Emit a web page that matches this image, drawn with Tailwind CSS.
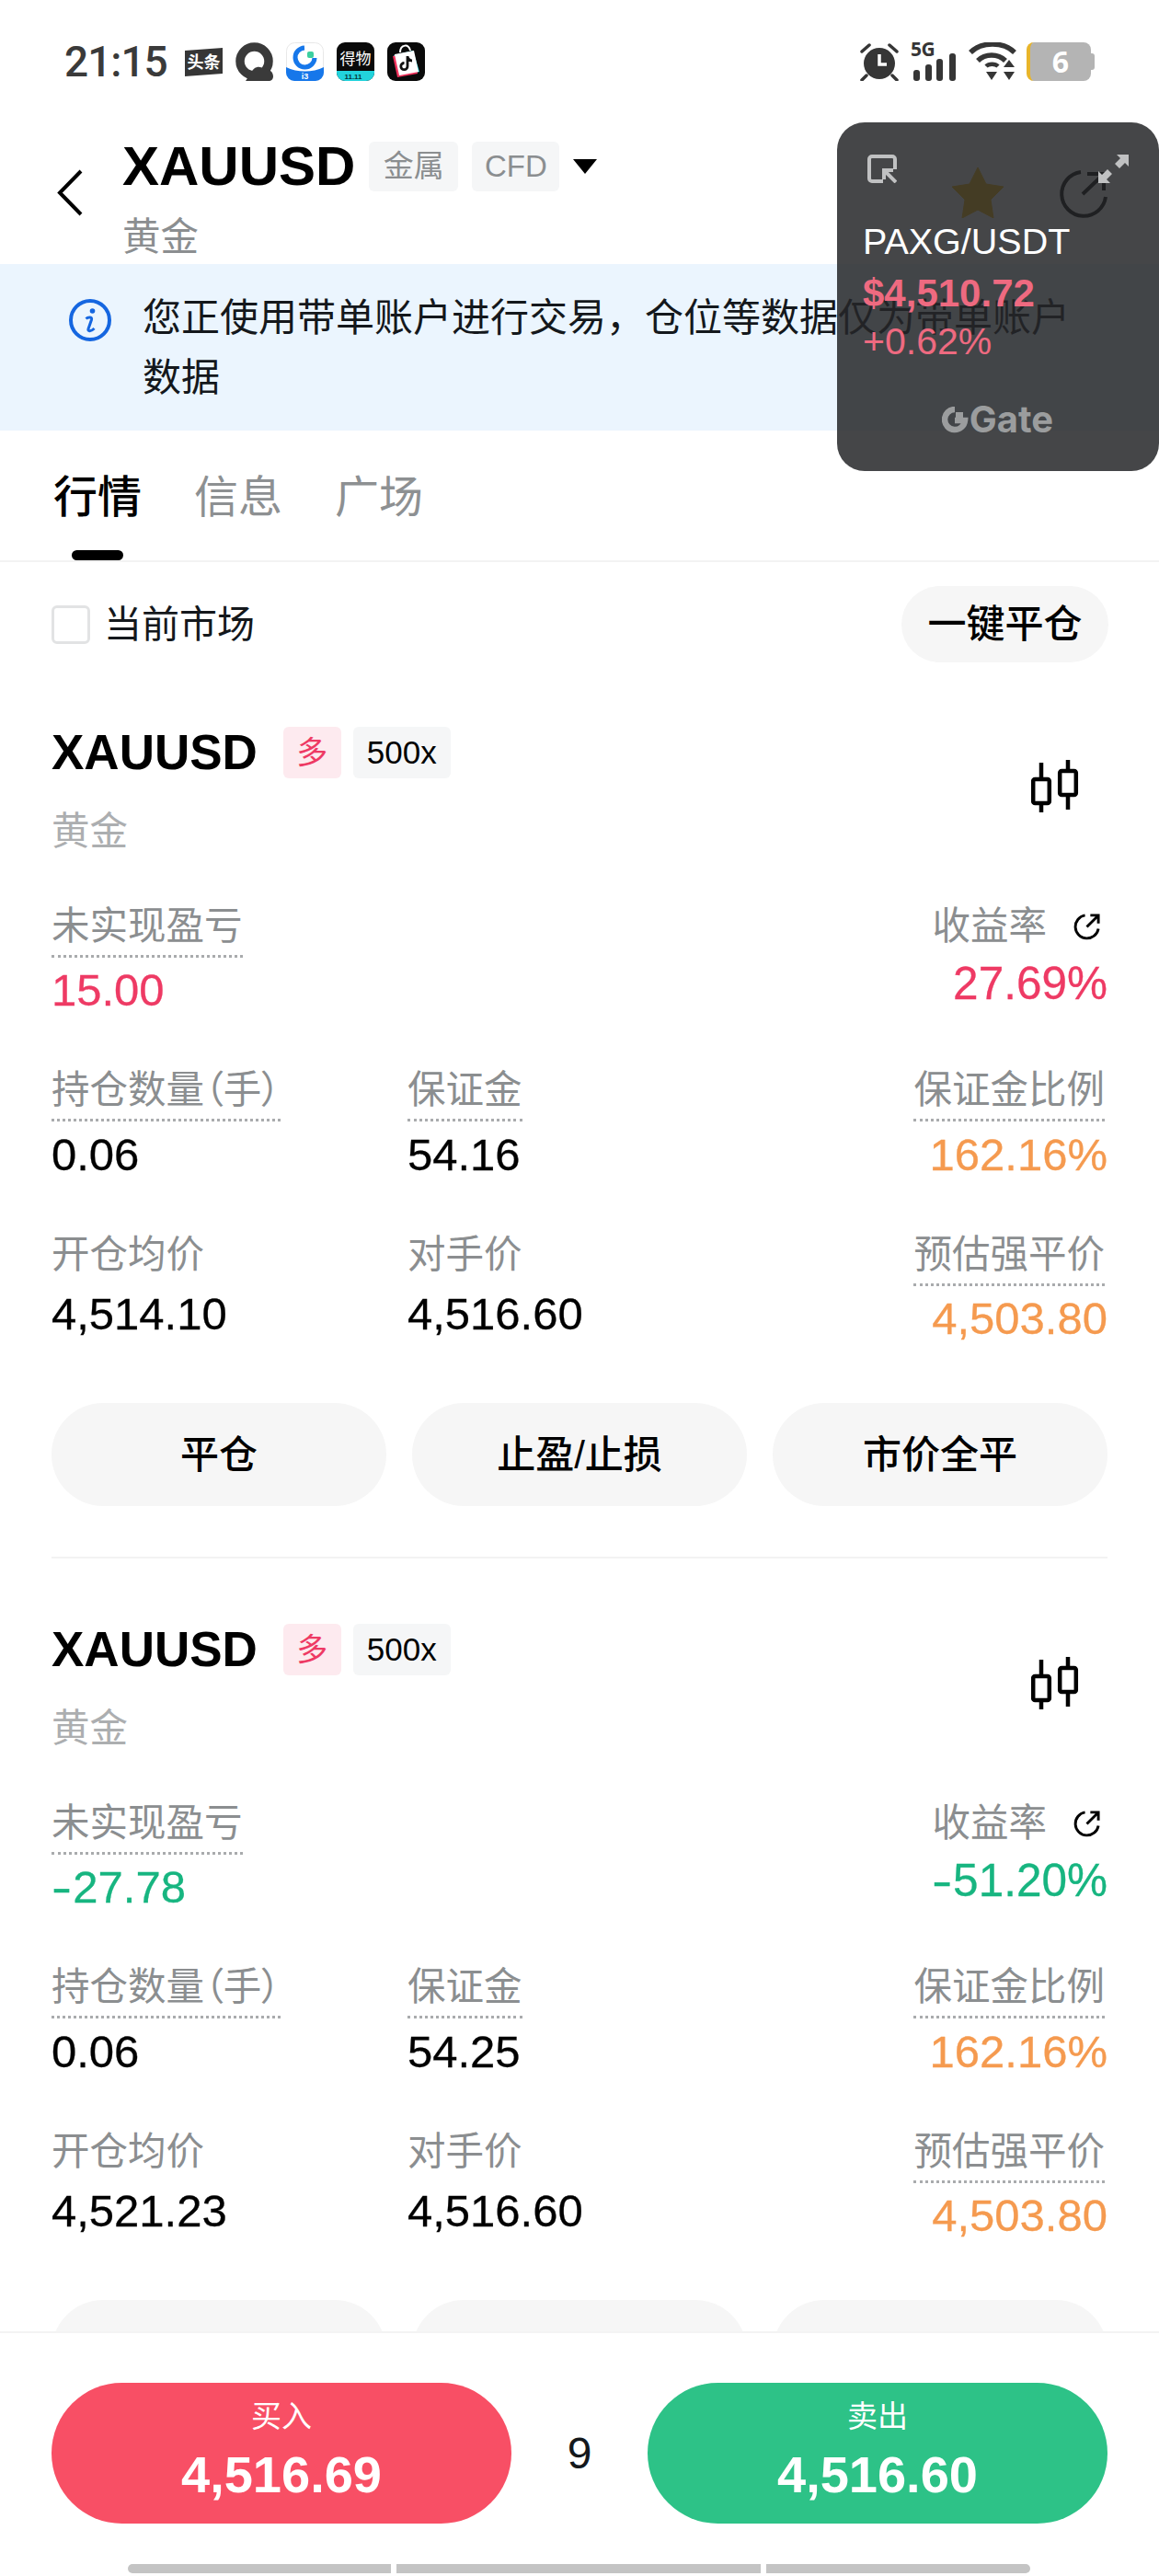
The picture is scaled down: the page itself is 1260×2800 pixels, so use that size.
<!DOCTYPE html>
<html lang="en">
<head>
    <meta charset="UTF-8">
    <title>XAUUSD</title>
    <script src="https://cdn.jsdelivr.net/npm/@tailwindcss/browser@4"></script>
</head>
<body class="bg-white">
<div class="relative w-[1260px] h-[2800px] overflow-hidden bg-white text-black font-['Liberation_Sans','Noto_Sans_CJK_SC',sans-serif]">

    <!-- Status bar -->
    <div class="h-[133px] pt-[46px] flex items-start">
        <span class="ml-[70px] w-[112px] h-[42px] flex items-center text-[46px] leading-[42px] font-medium tracking-[-1px] text-[#3a3a3a] font-['Roboto',sans-serif]">21:15</span>
        <div class="ml-[19px] flex gap-[14px]">
            <svg class="w-[41px] h-[42px]" viewBox="0 0 41 42">
                <path d="M0 9 L41 6 V34 L0 37 Z" fill="#363636"/>
                <text x="20.5" y="28" text-anchor="middle" font-size="18" font-weight="700" fill="#fff">头条</text>
            </svg>
            <svg class="w-[41px] h-[42px]" viewBox="0 0 41 42">
                <circle cx="20.5" cy="20.5" r="15.5" fill="none" stroke="#3a3a3a" stroke-width="9.5"/>
                <path d="M11 42 L17 33 C20 26 27 25 30 29 C36 28 41 32 41 37 C41 40 39 42 36 42 Z" fill="#3a3a3a"/>
            </svg>
            <svg class="w-[41px] h-[42px]" viewBox="0 0 41 42">
                <rect x=".5" y=".5" width="40" height="41" rx="9" fill="#fff" stroke="#e8e8e8"/>
                <path d="M0 27 C12 33 29 33 41 27 V33 A9 9 0 0 1 32 42 H9 A9 9 0 0 1 0 33 Z" fill="#1677ea"/>
                <path d="M20 6 A10.5 10.5 0 1 0 31 17" fill="none" stroke="#1677ea" stroke-width="5"/>
                <rect x="23" y="10" width="7" height="7" rx="2" fill="#3ccf9f"/>
                <text x="20.5" y="40" text-anchor="middle" font-size="9" font-weight="700" fill="#fff">i3</text>
            </svg>
            <svg class="w-[41px] h-[42px]" viewBox="0 0 41 42">
                <rect width="41" height="42" rx="9" fill="#0a0a0a"/>
                <path d="M0 31 H41 V33 A9 9 0 0 1 32 42 H9 A9 9 0 0 1 0 33 Z" fill="#22d3dc"/>
                <text x="20.5" y="24" text-anchor="middle" font-size="17" fill="#fff">得物</text>
                <text x="18" y="40" text-anchor="middle" font-size="8" font-weight="700" fill="#06363a">11.11</text>
            </svg>
            <svg class="w-[41px] h-[42px]" viewBox="0 0 41 42">
                <rect width="41" height="42" rx="9" fill="#0a0a0a"/>
                <path d="M7 14 L28 9 L35 32 L13 37 Z" fill="#23d6dc"/>
                <path d="M6 15 L27 10 L33 34 L11 38 Z" fill="#f0325c"/>
                <path d="M8 13 L29 9 L34 32 L13 36 Z" fill="#fff"/>
                <path d="M14 11 C14 2 24 1 25 9" fill="none" stroke="#fff" stroke-width="2"/>
                <path d="M22 15 V26 A3.6 3.6 0 1 1 18.5 22.5 M22 15 C22 18 25 20 27 20" fill="none" stroke="#111" stroke-width="2.8"/>
            </svg>
        </div>
        <div class="ml-auto mr-[70px] flex items-start">
            <svg class="w-[42px] h-[42px]" viewBox="0 0 42 42">
                <circle cx="21" cy="23" r="17" fill="#363636"/>
                <path d="M21 13 V24 H29" fill="none" stroke="#fff" stroke-width="3.5"/>
                <path d="M2 10 L10 3 M40 10 L32 3 M7 36 L2 41 M35 36 L40 41" fill="none" stroke="#363636" stroke-width="3.5" stroke-linecap="round"/>
            </svg>
            <div class="ml-[13px] w-[50px] h-[42px] relative">
                <span class="absolute left-0 top-[-3px] text-[21px] leading-[20px] font-bold tracking-[-0.5px] text-[#363636] font-['Noto_Sans',sans-serif]">5G</span>
                <svg class="absolute left-0 top-0 w-[50px] h-[42px]" viewBox="0 0 50 42">
                    <rect x="3" y="30" width="7" height="12" rx="3" fill="#363636"/>
                    <rect x="16" y="24" width="7" height="18" rx="3" fill="#363636"/>
                    <rect x="28" y="18" width="7" height="24" rx="3" fill="#363636"/>
                    <rect x="42" y="12" width="7" height="30" rx="3" fill="#363636"/>
                </svg>
            </div>
            <svg class="ml-[13px] w-[52px] h-[42px]" viewBox="0 0 52 42">
                <path d="M2 11 C14 -1 38 -1 50 11" fill="none" stroke="#363636" stroke-width="5.5"/>
                <path d="M10 20 C18 12 32 12 40 20" fill="none" stroke="#363636" stroke-width="5.5"/>
                <path d="M19 26 C22 23 29 23 32 26" fill="none" stroke="#363636" stroke-width="4.5"/>
                <path d="M19 32 H31 L25 41 Z" fill="#363636"/>
                <path d="M38 25 H50 L44 17 Z M38 30 H50 L44 39 Z" transform="translate(0 2)" fill="#363636"/>
            </svg>
            <div class="ml-[11px] flex items-center">
                <div class="w-[70px] h-[42px] rounded-[8px] bg-[#b4b4b4] border-l-[4px] border-[#e8b52a] flex items-center justify-center">
                    <span class="text-[32px] leading-[42px] font-bold text-white font-['Noto_Sans',sans-serif]">6</span>
                </div>
                <div class="w-[4px] h-[18px] rounded-r-[3px] bg-[#b4b4b4]"></div>
            </div>
        </div>
    </div>

    <!-- Header -->
    <div class="h-[154px] pl-[62px] pr-[55px] flex items-start">
        <svg class="mt-[51px] w-[28px] h-[51px]" viewBox="0 0 28 51">
            <path d="M26 2 L3 25.5 L26 49" fill="none" stroke="#000" stroke-width="4"/>
        </svg>
        <div class="ml-[43px] pt-[21px]">
            <div class="flex items-center h-[54px]">
                <span class="text-[60px] leading-[54px] font-bold">XAUUSD</span>
                <span class="ml-[15px] w-[97px] h-[54px] rounded-[6px] bg-[#f5f6f7] flex items-center justify-center text-[33px] text-[#8b8e90]">金属</span>
                <span class="ml-[15px] w-[95px] h-[54px] rounded-[6px] bg-[#f5f6f7] flex items-center justify-center text-[33px] text-[#8b8e90]">CFD</span>
                <svg class="ml-[15px] w-[26px] h-[16px]" viewBox="0 0 26 16"><path d="M0 0 H26 L13 16 Z" fill="#000"/></svg>
            </div>
            <div class="mt-[28px] text-[41.5px] leading-[44px] text-[#8b8e90]">黄金</div>
        </div>
        <div class="ml-auto mt-[49px] flex items-start">
            <svg class="w-[56px] h-[55px]" viewBox="0 0 56 55">
                <path d="M28 0 L37 18 L56 21 L42 35 L45 55 L28 46 L11 55 L14 35 L0 21 L19 18 Z" fill="#f5b90f" stroke="#f5b90f" stroke-width="1" stroke-linejoin="round"/>
            </svg>
            <svg class="ml-[58px] mt-[2px] w-[56px] h-[56px]" viewBox="0 0 56 56">
                <path d="M26 3 A24 24 0 1 0 53 30" fill="none" stroke="#000" stroke-width="4"/>
                <path d="M28 27 L50 6 M33 5 H51 V23" fill="none" stroke="#000" stroke-width="4"/>
            </svg>
        </div>
    </div>

    <!-- Notice -->
    <div class="h-[181px] bg-[#ebf5fe] pl-[75px] pt-[26px] flex items-start">
        <svg class="mt-[12px] w-[46px] h-[46px]" viewBox="0 0 46 46">
            <circle cx="23" cy="23" r="21" fill="none" stroke="#1566e0" stroke-width="4"/>
            <circle cx="25.5" cy="13" r="2.8" fill="#1566e0"/>
            <path d="M18.5 21.5 C20.5 19.5 25.5 19 24.5 22.5 L21 32.5 C20 35.5 24 35.5 27.5 32" fill="none" stroke="#1566e0" stroke-width="3"/>
        </svg>
        <p class="ml-[34px] w-[1020px] text-[42px] leading-[65px] text-[#14181c]">您正使用带单账户进行交易，仓位等数据仅为带单账户数据</p>
    </div>

    <!-- Tabs -->
    <div class="h-[143px] pl-[58px] pt-[41px] flex items-start gap-[57px] border-b-2 border-[#f3f3f3]">
        <div class="flex flex-col items-center">
            <span class="text-[48px] leading-[64px] font-medium">行情</span>
            <span class="mt-[25px] w-[56px] h-[11px] rounded-full bg-black"></span>
        </div>
        <span class="text-[48px] leading-[64px] text-[#8d9092]">信息</span>
        <span class="text-[48px] leading-[64px] text-[#8d9092]">广场</span>
    </div>

    <!-- Filter -->
    <div class="h-[134px] pl-[56px] pr-[55px] pt-[26px] flex items-start justify-between">
        <div class="h-[83px] flex items-center">
            <span class="w-[42px] h-[42px] rounded-[6px] border-[3px] border-[#e2e3e4]"></span>
            <span class="ml-[15px] mt-[2px] text-[41px] text-[#14181c]">当前市场</span>
        </div>
        <span class="w-[225px] h-[83px] rounded-full bg-[#f6f6f6] flex items-center justify-center text-[42px] font-medium">一键平仓</span>
    </div>

    <!-- Position 1 -->
    <div class="h-[975px] px-[56px] pt-[45px]">
        <div class="flex items-start justify-between">
            <div>
                <div class="flex items-center h-[56px]">
                    <span class="text-[53px] leading-[56px] font-bold">XAUUSD</span>
                    <span class="ml-[28px] w-[63px] h-[56px] rounded-[6px] bg-[#fdeaef] flex items-center justify-center text-[34px] text-[#ee3a64]">多</span>
                    <span class="ml-[13px] w-[106px] h-[56px] rounded-[6px] bg-[#f5f6f7] flex items-center justify-center text-[35px]">500x</span>
                </div>
                <div class="mt-[30px] text-[41.5px] leading-[56px] text-[#acaeb0]">黄金</div>
            </div>
            <svg class="mt-[36px] mr-[31px] w-[52px] h-[57px]" viewBox="0 0 52 57">
                <path d="M11 3 V57 M40 0 V54" fill="none" stroke="#000" stroke-width="4.5"/>
                <rect x="2.2" y="21" width="17.6" height="26" rx="2" fill="#fff" stroke="#000" stroke-width="4.5"/>
                <rect x="31.2" y="12" width="17.6" height="26" rx="2" fill="#fff" stroke="#000" stroke-width="4.5"/>
            </svg>
        </div>
        <div class="mt-[47px] flex justify-between">
            <div class="flex flex-col items-start">
                <span class="text-[41.5px] leading-[56px] pb-[3px] border-b-[3px] border-dotted border-[#a9abad] text-[#8b8e90]">未实现盈亏</span>
                <span class="mt-[7px] text-[49px] leading-[56px] text-[#ee3a64] [-webkit-text-stroke:0.3px]">15.00</span>
            </div>
            <div class="flex flex-col items-end">
                <div class="flex items-center h-[56px]">
                    <span class="text-[41.5px] leading-[56px] text-[#8b8e90]">收益率</span>
                    <svg class="ml-[28px] mr-[7px] w-[31px] h-[31px]" viewBox="0 0 32 32">
                        <path d="M14 3 A13 13 0 1 0 29 18" fill="none" stroke="#000" stroke-width="3"/>
                        <path d="M16 16 L29 3 M20 3 H29 V12" fill="none" stroke="#000" stroke-width="3"/>
                    </svg>
                </div>
                <span class="mt-[6px] text-[49.5px] leading-[56px] text-[#ee3a64] [-webkit-text-stroke:0.3px]">27.69%</span>
            </div>
        </div>
        <div class="mt-[53px] grid grid-cols-[387px_1fr_auto]">
            <div class="flex flex-col items-start">
                <span class="text-[41.5px] leading-[56px] pb-[3px] border-b-[3px] border-dotted border-[#a9abad] text-[#8b8e90]">持仓数量<span class="[font-feature-settings:'palt']">（手）</span></span>
                <span class="mt-[8px] text-[49px] leading-[56px] [-webkit-text-stroke:0.3px]">0.06</span>
            </div>
            <div class="flex flex-col items-start">
                <span class="text-[41.5px] leading-[56px] pb-[3px] border-b-[3px] border-dotted border-[#a9abad] text-[#8b8e90]">保证金</span>
                <span class="mt-[8px] text-[49px] leading-[56px] [-webkit-text-stroke:0.3px]">54.16</span>
            </div>
            <div class="flex flex-col items-end">
                <span class="mr-[3px] text-[41.5px] leading-[56px] pb-[3px] border-b-[3px] border-dotted border-[#a9abad] text-[#8b8e90]">保证金比例</span>
                <span class="mt-[8px] text-[49px] leading-[56px] text-[#f59a4f] [-webkit-text-stroke:0.3px]">162.16%</span>
            </div>
        </div>
        <div class="mt-[53px] grid grid-cols-[387px_1fr_auto]">
            <div class="flex flex-col items-start">
                <span class="text-[41.5px] leading-[56px] text-[#8b8e90]">开仓均价</span>
                <span class="mt-[8px] text-[49px] leading-[56px] [-webkit-text-stroke:0.3px]">4,514.10</span>
            </div>
            <div class="flex flex-col items-start">
                <span class="text-[41.5px] leading-[56px] text-[#8b8e90]">对手价</span>
                <span class="mt-[8px] text-[49px] leading-[56px] [-webkit-text-stroke:0.3px]">4,516.60</span>
            </div>
            <div class="flex flex-col items-end">
                <span class="mr-[3px] text-[41.5px] leading-[56px] pb-[3px] border-b-[3px] border-dotted border-[#a9abad] text-[#8b8e90]">预估强平价</span>
                <span class="mt-[7px] text-[49px] leading-[56px] text-[#f59a4f] [-webkit-text-stroke:0.3px]">4,503.80</span>
            </div>
        </div>
        <div class="mt-[64px] grid grid-cols-3 gap-x-[28px]">
            <span class="h-[112px] rounded-full bg-[#f6f6f6] flex items-center justify-center text-[42px] font-medium">平仓</span>
            <span class="h-[112px] rounded-full bg-[#f6f6f6] flex items-center justify-center text-[42px] font-medium">止盈/止损</span>
            <span class="h-[112px] rounded-full bg-[#f6f6f6] flex items-center justify-center text-[42px] font-medium">市价全平</span>
        </div>
        <div class="mt-[55px] h-[2px] bg-[#f3f3f3]"></div>
    </div>

    <!-- Position 2 -->
    <div class="h-[975px] px-[56px] pt-[45px]">
        <div class="flex items-start justify-between">
            <div>
                <div class="flex items-center h-[56px]">
                    <span class="text-[53px] leading-[56px] font-bold">XAUUSD</span>
                    <span class="ml-[28px] w-[63px] h-[56px] rounded-[6px] bg-[#fdeaef] flex items-center justify-center text-[34px] text-[#ee3a64]">多</span>
                    <span class="ml-[13px] w-[106px] h-[56px] rounded-[6px] bg-[#f5f6f7] flex items-center justify-center text-[35px]">500x</span>
                </div>
                <div class="mt-[30px] text-[41.5px] leading-[56px] text-[#acaeb0]">黄金</div>
            </div>
            <svg class="mt-[36px] mr-[31px] w-[52px] h-[57px]" viewBox="0 0 52 57">
                <path d="M11 3 V57 M40 0 V54" fill="none" stroke="#000" stroke-width="4.5"/>
                <rect x="2.2" y="21" width="17.6" height="26" rx="2" fill="#fff" stroke="#000" stroke-width="4.5"/>
                <rect x="31.2" y="12" width="17.6" height="26" rx="2" fill="#fff" stroke="#000" stroke-width="4.5"/>
            </svg>
        </div>
        <div class="mt-[47px] flex justify-between">
            <div class="flex flex-col items-start">
                <span class="text-[41.5px] leading-[56px] pb-[3px] border-b-[3px] border-dotted border-[#a9abad] text-[#8b8e90]">未实现盈亏</span>
                <span class="mt-[7px] text-[49px] leading-[56px] text-[#17b580] [-webkit-text-stroke:0.3px]"><span class="inline-block mr-[7px] origin-left scale-x-[1.35]">-</span>27.78</span>
            </div>
            <div class="flex flex-col items-end">
                <div class="flex items-center h-[56px]">
                    <span class="text-[41.5px] leading-[56px] text-[#8b8e90]">收益率</span>
                    <svg class="ml-[28px] mr-[7px] w-[31px] h-[31px]" viewBox="0 0 32 32">
                        <path d="M14 3 A13 13 0 1 0 29 18" fill="none" stroke="#000" stroke-width="3"/>
                        <path d="M16 16 L29 3 M20 3 H29 V12" fill="none" stroke="#000" stroke-width="3"/>
                    </svg>
                </div>
                <span class="mt-[6px] text-[49.5px] leading-[56px] text-[#17b580] [-webkit-text-stroke:0.3px]"><span class="inline-block mr-[7px] origin-left scale-x-[1.35]">-</span>51.20%</span>
            </div>
        </div>
        <div class="mt-[53px] grid grid-cols-[387px_1fr_auto]">
            <div class="flex flex-col items-start">
                <span class="text-[41.5px] leading-[56px] pb-[3px] border-b-[3px] border-dotted border-[#a9abad] text-[#8b8e90]">持仓数量<span class="[font-feature-settings:'palt']">（手）</span></span>
                <span class="mt-[8px] text-[49px] leading-[56px] [-webkit-text-stroke:0.3px]">0.06</span>
            </div>
            <div class="flex flex-col items-start">
                <span class="text-[41.5px] leading-[56px] pb-[3px] border-b-[3px] border-dotted border-[#a9abad] text-[#8b8e90]">保证金</span>
                <span class="mt-[8px] text-[49px] leading-[56px] [-webkit-text-stroke:0.3px]">54.25</span>
            </div>
            <div class="flex flex-col items-end">
                <span class="mr-[3px] text-[41.5px] leading-[56px] pb-[3px] border-b-[3px] border-dotted border-[#a9abad] text-[#8b8e90]">保证金比例</span>
                <span class="mt-[8px] text-[49px] leading-[56px] text-[#f59a4f] [-webkit-text-stroke:0.3px]">162.16%</span>
            </div>
        </div>
        <div class="mt-[53px] grid grid-cols-[387px_1fr_auto]">
            <div class="flex flex-col items-start">
                <span class="text-[41.5px] leading-[56px] text-[#8b8e90]">开仓均价</span>
                <span class="mt-[8px] text-[49px] leading-[56px] [-webkit-text-stroke:0.3px]">4,521.23</span>
            </div>
            <div class="flex flex-col items-start">
                <span class="text-[41.5px] leading-[56px] text-[#8b8e90]">对手价</span>
                <span class="mt-[8px] text-[49px] leading-[56px] [-webkit-text-stroke:0.3px]">4,516.60</span>
            </div>
            <div class="flex flex-col items-end">
                <span class="mr-[3px] text-[41.5px] leading-[56px] pb-[3px] border-b-[3px] border-dotted border-[#a9abad] text-[#8b8e90]">预估强平价</span>
                <span class="mt-[7px] text-[49px] leading-[56px] text-[#f59a4f] [-webkit-text-stroke:0.3px]">4,503.80</span>
            </div>
        </div>
        <div class="mt-[64px] grid grid-cols-3 gap-x-[28px]">
            <span class="h-[112px] rounded-full bg-[#f6f6f6]"></span>
            <span class="h-[112px] rounded-full bg-[#f6f6f6]"></span>
            <span class="h-[112px] rounded-full bg-[#f6f6f6]"></span>
        </div>
    </div>

    <!-- Floating price window -->
    <div class="absolute left-[910px] top-[133px] w-[350px] h-[379px] rounded-[30px] bg-[#242628]/85 pl-[28px] pr-[29px] pt-[35px] flex flex-col">
        <div class="flex justify-between h-[31px] pl-[5px] pr-[4px]">
            <svg class="w-[32px] h-[31px]" viewBox="0 0 32 31">
                <path d="M17 29 H5 A3 3 0 0 1 2 26 V5 A3 3 0 0 1 5 2 H27 A3 3 0 0 1 30 5 V16" fill="none" stroke="#c0c1c2" stroke-width="4"/>
                <path d="M31 30 L20 19 M18 27 V17 H28" fill="none" stroke="#c0c1c2" stroke-width="4"/>
            </svg>
            <svg class="w-[33px] h-[31px]" viewBox="0 0 33 31">
                <path d="M33 0 V13 L29 9 L23 15 L18 10 L24 4 L20 0 Z M0 31 V18 L4 22 L10 16 L15 21 L9 27 L13 31 Z" fill="#c0c1c2"/>
            </svg>
        </div>
        <div class="mt-[41px] text-[39.5px] leading-[44px] text-white">PAXG/USDT</div>
        <div class="mt-[12px] text-[42px] leading-[46px] font-bold text-[#ee6a80]">$4,510.72</div>
        <div class="mt-[7px] text-[41px] leading-[44px] text-[#ee6a80]">+0.62%</div>
        <div class="mt-[45px] flex items-center justify-center h-[36px]">
            <svg class="w-[29px] h-[29px]" viewBox="0 0 29 29">
                <path d="M14 3 A11 11 0 1 0 25 15 H14" fill="none" stroke="#9b9d9e" stroke-width="6.5"/>
                <rect x="15" y="6" width="8" height="8" fill="#9b9d9e"/>
            </svg>
            <span class="ml-[1px] text-[40px] leading-[36px] font-bold text-[#9b9d9e] font-['Inter',sans-serif]">Gate</span>
        </div>
    </div>

    <!-- Bottom trade bar -->
    <div class="absolute left-0 bottom-0 w-full h-[266px] bg-white border-t-2 border-[#f3f3f3] pt-[54px] flex flex-col">
        <div class="px-[56px] flex items-center justify-between">
            <div class="w-[500px] h-[153px] rounded-full bg-[#f84f65] text-white flex flex-col items-center pt-[17px]">
                <span class="text-[33px] leading-[40px]">买入</span>
                <span class="mt-[11px] text-[56px] leading-[64px] font-bold">4,516.69</span>
            </div>
            <span class="text-[48px] leading-[56px] text-[#14181c]">9</span>
            <div class="w-[500px] h-[153px] rounded-full bg-[#2dc287] text-white flex flex-col items-center pt-[17px]">
                <span class="text-[33px] leading-[40px]">卖出</span>
                <span class="mt-[11px] text-[56px] leading-[64px] font-bold">4,516.60</span>
            </div>
        </div>
        <div class="mt-[44px] ml-[139px] w-[981px] h-[10px] flex gap-[6px]">
            <span class="w-[286px] rounded-l-full bg-[#c4c4c4]"></span>
            <span class="w-[396px] bg-[#c4c4c4]"></span>
            <span class="w-[287px] rounded-r-full bg-[#c4c4c4]"></span>
        </div>
    </div>
</div>
</body>
</html>
